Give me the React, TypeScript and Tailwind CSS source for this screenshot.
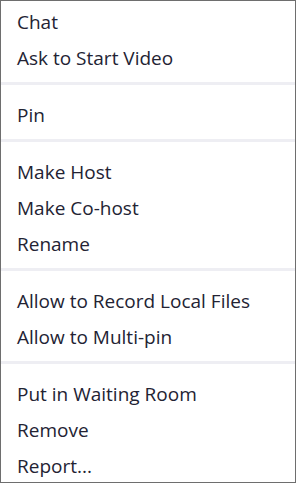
const groups = [
  ["Chat", "Ask to Start Video"],
  ["Pin"],
  ["Make Host", "Make Co-host", "Rename"],
  ["Allow to Record Local Files", "Allow to Multi-pin"],
  ["Put in Waiting Room", "Remove", "Report..."],
];

export default function App() {
  return (
    <div className="h-[483px] w-[296px] overflow-hidden border border-[#6e6e6e] bg-white font-['Open_Sans',sans-serif] text-[#232333]">
      {groups.map((items, i) => (
        <div
          key={i}
          className={
            "py-[9px] first:pt-0 last:pb-0 " +
            (i < groups.length - 1 ? "border-b-[3px] border-[#eeeef3]" : "")
          }
        >
          {items.map((label) => (
            <div key={label} className="flex h-9 items-center px-4 pt-[6px] text-[19px] leading-none">
              {label}
            </div>
          ))}
        </div>
      ))}
    </div>
  );
}
